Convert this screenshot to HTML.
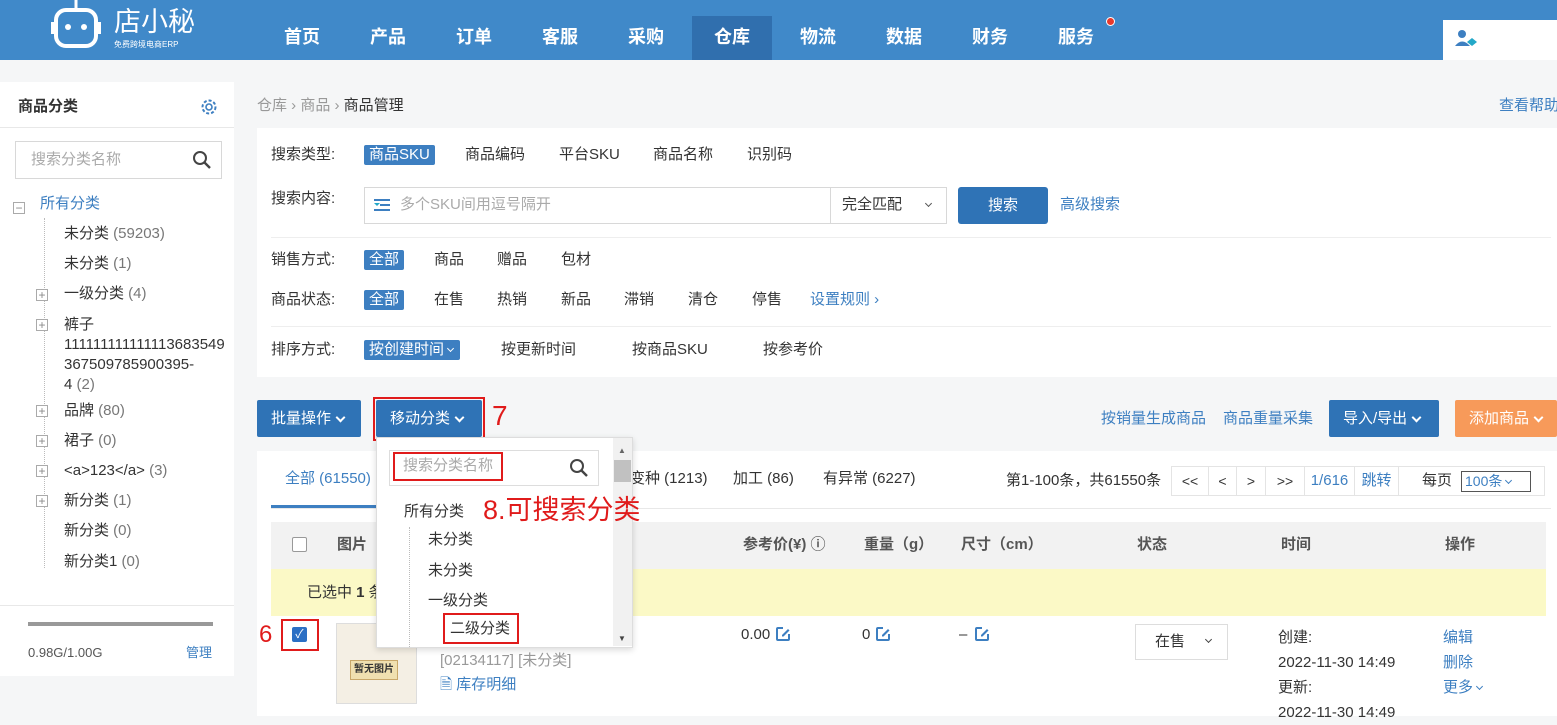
<!DOCTYPE html>
<html><head><meta charset="utf-8"><style>
*{margin:0;padding:0;box-sizing:border-box}
body{width:1557px;height:716px;overflow:hidden;background:#f5f6f7;font-family:"Liberation Sans","Noto Sans CJK SC",sans-serif;font-size:15px;line-height:18px;color:#333;position:relative}
.a{position:absolute;white-space:nowrap}
.hdr{left:0;top:0;width:1557px;height:60px;background:#4089c9}
.nav{top:26px;color:#fff;font-weight:bold;font-size:18px;line-height:22px}
.blue{color:#3d7fc1}
.gray{color:#777}
.tag{background:#3d7fc1;color:#fff;padding:1px 5px;border-radius:2px}
.btn{background:#2f73b6;color:#fff;height:37px;line-height:37px;padding:0 14px;border-radius:2px}
.red{border:2px solid #e01b1b}
.box{background:#fff}
.pl{width:12px;height:12px;border:1px solid #aaa;background:#fff;font-size:12px;line-height:10px;text-align:center;color:#888}
.ch{display:inline-block;width:7px;height:7px;border-right:2px solid currentColor;border-bottom:2px solid currentColor;transform:rotate(45deg);margin:0 0 4px 6px;vertical-align:middle}
.ch.s{width:5px;height:5px;border-width:1.5px;margin-left:4px}
.pg{top:466px;height:30px;border:1px solid #e4e4e4;line-height:28px;text-align:center;font-size:14px}
</style></head><body>
<div class="a hdr"></div>
<div class="a" style="left:692px;top:16px;width:80px;height:44px;background:#306fae"></div>
<svg class="a" style="left:50px;top:0" width="52" height="52" viewBox="0 0 52 52"><line x1="26" y1="0" x2="26" y2="8" stroke="#fff" stroke-width="3"/><rect x="6" y="10" width="40" height="36" rx="10" fill="none" stroke="#fff" stroke-width="4"/><circle cx="18" cy="27" r="3" fill="#fff"/><circle cx="34" cy="27" r="3" fill="#fff"/><rect x="1" y="22" width="4" height="12" fill="#fff"/><rect x="47" y="22" width="4" height="12" fill="#fff"/></svg>
<div class="a" style="left:114px;top:7px;color:#fff;font-size:27px;line-height:30px">店小秘</div>
<div class="a" style="left:114px;top:40px;color:#fff;font-size:8px;line-height:10px">免费跨境电商ERP</div>
<div class="a nav" style="left:284px">首页</div>
<div class="a nav" style="left:370px">产品</div>
<div class="a nav" style="left:456px">订单</div>
<div class="a nav" style="left:542px">客服</div>
<div class="a nav" style="left:628px">采购</div>
<div class="a nav" style="left:714px">仓库</div>
<div class="a nav" style="left:800px">物流</div>
<div class="a nav" style="left:886px">数据</div>
<div class="a nav" style="left:972px">财务</div>
<div class="a nav" style="left:1058px">服务</div>
<div class="a" style="left:1106px;top:17px;width:9px;height:9px;border-radius:50%;background:#e8392c;border:1px solid #fff"></div>
<div class="a" style="left:1443px;top:20px;width:114px;height:40px;background:#fff"></div>
<svg class="a" style="left:1453px;top:28px" width="32" height="24"><circle cx="9" cy="6" r="4" fill="#3d7fc1"/><path d="M2 18 q7-9 15 0z" fill="#3d7fc1"/><path d="M14 14 l5-4 l5 4 l-5 4z" fill="#23a8c8"/></svg>

<div class="a box" style="left:0;top:82px;width:234px;height:594px"></div>
<div class="a" style="left:0;top:82px;width:234px;height:46px;border-bottom:1px solid #e8e8e8"></div>
<div class="a" style="left:18px;top:98px;font-weight:bold">商品分类</div>
<svg class="a" style="left:199px;top:97px" width="20" height="20" viewBox="0 0 20 20"><circle cx="10" cy="10" r="6.5" fill="none" stroke="#3d7fc1" stroke-width="2" stroke-dasharray="3 2"/><circle cx="10" cy="10" r="3" fill="none" stroke="#3d7fc1" stroke-width="1.6"/></svg>
<div class="a" style="left:15px;top:141px;width:207px;height:38px;border:1px solid #d8d8d8"></div>
<div class="a" style="left:31px;top:151px;color:#aaa">搜索分类名称</div>
<svg class="a" style="left:192px;top:150px" width="20" height="20"><circle cx="8" cy="8" r="6" fill="none" stroke="#444" stroke-width="2"/><line x1="12.5" y1="12.5" x2="18" y2="18" stroke="#444" stroke-width="2.4"/></svg>
<div class="a pl" style="left:13px;top:202px">−</div>
<div class="a blue" style="left:40px;top:195px">所有分类</div>
<div class="a" style="left:44px;top:218px;width:1px;height:350px;border-left:1px dotted #bbb"></div>
<div class="a" style="left:64px;top:225px">未分类 <span class="gray">(59203)</span></div>
<div class="a" style="left:64px;top:255px">未分类 <span class="gray">(1)</span></div>
<div class="a" style="left:64px;top:285px">一级分类 <span class="gray">(4)</span></div>
<div class="a" style="left:64px;top:315px;line-height:20px">裤子<br>111111111111113683549<br>367509785900395-<br>4 <span class="gray">(2)</span></div>
<div class="a" style="left:64px;top:402px">品牌 <span class="gray">(80)</span></div>
<div class="a" style="left:64px;top:432px">裙子 <span class="gray">(0)</span></div>
<div class="a" style="left:64px;top:462px">&lt;a&gt;123&lt;/a&gt; <span class="gray">(3)</span></div>
<div class="a" style="left:64px;top:492px">新分类 <span class="gray">(1)</span></div>
<div class="a" style="left:64px;top:522px">新分类 <span class="gray">(0)</span></div>
<div class="a" style="left:64px;top:553px">新分类1 <span class="gray">(0)</span></div>
<div class="a pl" style="left:36px;top:289px">+</div>
<div class="a pl" style="left:36px;top:319px">+</div>
<div class="a pl" style="left:36px;top:405px">+</div>
<div class="a pl" style="left:36px;top:435px">+</div>
<div class="a pl" style="left:36px;top:465px">+</div>
<div class="a pl" style="left:36px;top:495px">+</div>
<div class="a" style="left:0;top:605px;width:234px;height:1px;background:#e8e8e8"></div>
<div class="a" style="left:28px;top:622px;width:185px;height:4px;background:#999"></div>
<div class="a" style="left:28px;top:644px;font-size:13px;color:#555">0.98G/1.00G</div>
<div class="a blue" style="left:186px;top:644px;font-size:13px">管理</div>

<div class="a" style="left:257px;top:97px;color:#999">仓库 › 商品 › <span style="color:#333">商品管理</span></div>
<div class="a blue" style="left:1499px;top:97px">查看帮助</div>

<div class="a box" style="left:257px;top:128px;width:1300px;height:249px"></div>
<div class="a" style="left:271px;top:146px">搜索类型:</div>
<div class="a tag" style="left:364px;top:145px">商品SKU</div>
<div class="a" style="left:465px;top:146px">商品编码</div>
<div class="a" style="left:559px;top:146px">平台SKU</div>
<div class="a" style="left:653px;top:146px">商品名称</div>
<div class="a" style="left:747px;top:146px">识别码</div>
<div class="a" style="left:271px;top:190px">搜索内容:</div>
<div class="a" style="left:364px;top:187px;width:583px;height:37px;border:1px solid #d8d8d8;background:#fff"></div>
<div class="a" style="left:830px;top:187px;width:1px;height:37px;background:#d8d8d8"></div>
<svg class="a" style="left:372px;top:197px" width="20" height="16"><path d="M2 3h16M8 8h10M2 13h16" stroke="#3d7fc1" stroke-width="2"/><path d="M2 6l3 3 3-3z" fill="#23a8c8"/></svg>
<div class="a" style="left:400px;top:196px;color:#aaa">多个SKU间用逗号隔开</div>
<div class="a" style="left:842px;top:196px">完全匹配</div>
<div class="a" style="left:922px;top:196px;color:#555"><span class="ch s"></span></div>
<div class="a btn" style="left:958px;top:187px;width:90px;text-align:center;border-radius:3px">搜索</div>
<div class="a blue" style="left:1060px;top:196px">高级搜索</div>
<div class="a" style="left:271px;top:237px;width:1280px;height:1px;background:#eee"></div>
<div class="a" style="left:271px;top:251px">销售方式:</div>
<div class="a tag" style="left:364px;top:250px">全部</div>
<div class="a" style="left:434px;top:251px">商品</div><div class="a" style="left:497px;top:251px">赠品</div><div class="a" style="left:561px;top:251px">包材</div>
<div class="a" style="left:271px;top:291px">商品状态:</div>
<div class="a tag" style="left:364px;top:290px">全部</div>
<div class="a" style="left:434px;top:291px">在售</div><div class="a" style="left:497px;top:291px">热销</div><div class="a" style="left:561px;top:291px">新品</div><div class="a" style="left:624px;top:291px">滞销</div><div class="a" style="left:688px;top:291px">清仓</div><div class="a" style="left:752px;top:291px">停售</div>
<div class="a blue" style="left:810px;top:291px">设置规则 ›</div>
<div class="a" style="left:271px;top:326px;width:1280px;height:1px;background:#eee"></div>
<div class="a" style="left:271px;top:341px">排序方式:</div>
<div class="a tag" style="left:364px;top:340px;padding-right:7px">按创建时间<span class="ch s"></span></div>
<div class="a" style="left:501px;top:341px">按更新时间</div><div class="a" style="left:632px;top:341px">按商品SKU</div><div class="a" style="left:763px;top:341px">按参考价</div>

<div class="a btn" style="left:257px;top:400px;width:104px">批量操作<span class="ch"></span></div>
<div class="a btn" style="left:376px;top:400px;width:106px">移动分类<span class="ch"></span></div>
<div class="a red" style="left:373px;top:397px;width:112px;height:44px"></div>
<div class="a" style="left:492px;top:400px;color:#e01b1b;font-size:28px;line-height:32px">7</div>
<div class="a blue" style="left:1101px;top:410px">按销量生成商品</div>
<div class="a blue" style="left:1223px;top:410px">商品重量采集</div>
<div class="a btn" style="left:1329px;top:400px;width:110px">导入/导出<span class="ch"></span></div>
<div class="a btn" style="left:1455px;top:400px;width:102px;background:#f79a5a">添加商品<span class="ch"></span></div>

<div class="a box" style="left:257px;top:451px;width:1300px;height:265px"></div>
<div class="a blue" style="left:285px;top:470px">全部 (61550)</div>
<div class="a" style="left:271px;top:505px;width:110px;height:3px;background:#3d7fc1"></div>
<div class="a" style="left:271px;top:508px;width:1280px;height:1px;background:#e8e8e8"></div>
<div class="a" style="left:630px;top:470px">变种 (1213)</div>
<div class="a" style="left:733px;top:470px">加工 (86)</div>
<div class="a" style="left:823px;top:470px">有异常 (6227)</div>
<div class="a" style="left:1006px;top:472px">第1-100条，共61550条</div>
<div class="a pg" style="left:1171px;width:38px">&lt;&lt;</div>
<div class="a pg" style="left:1208px;width:29px">&lt;</div>
<div class="a pg" style="left:1236px;width:30px">&gt;</div>
<div class="a pg" style="left:1265px;width:40px">&gt;&gt;</div>
<div class="a pg blue" style="left:1304px;width:51px;font-size:15px">1/616</div>
<div class="a pg blue" style="left:1354px;width:45px;font-size:15px">跳转</div>
<div class="a pg" style="left:1398px;width:147px"></div>
<div class="a" style="left:1422px;top:472px">每页</div>
<div class="a blue" style="left:1461px;top:471px;width:70px;height:21px;border:1px solid #555;font-size:14px;line-height:19px;padding-left:3px">100条<span class="ch s"></span></div>
<div class="a" style="left:271px;top:522px;width:1275px;height:47px;background:#f2f2f2"></div>
<div class="a" style="left:292px;top:537px;width:15px;height:15px;border:1px solid #999;background:#fff;border-radius:2px"></div>
<div class="a" style="left:337px;top:536px;color:#555;font-weight:bold">图片</div>
<div class="a" style="left:743px;top:536px;color:#555;font-weight:bold">参考价(¥) ⓘ</div>
<div class="a" style="left:864px;top:536px;color:#555;font-weight:bold">重量（g）</div>
<div class="a" style="left:961px;top:536px;color:#555;font-weight:bold">尺寸（cm）</div>
<div class="a" style="left:1137px;top:536px;color:#555;font-weight:bold">状态</div>
<div class="a" style="left:1281px;top:536px;color:#555;font-weight:bold">时间</div>
<div class="a" style="left:1445px;top:536px;color:#555;font-weight:bold">操作</div>
<div class="a" style="left:271px;top:569px;width:1275px;height:47px;background:#fbf9c6"></div>
<div class="a" style="left:307px;top:584px">已选中 <b>1</b> 条</div>
<div class="a" style="left:259px;top:622px;color:#e01b1b;font-size:24px;line-height:26px">6</div>
<div class="a red" style="left:281px;top:619px;width:38px;height:32px"></div>
<div class="a" style="left:292px;top:627px;width:15px;height:15px;background:#2b6fc4;border-radius:2px;color:#fff;font-size:12px;line-height:15px;text-align:center">✓</div>
<div class="a" style="left:336px;top:623px;width:81px;height:81px;border:1px solid #ddd;background:#f4efe4"></div>
<div class="a" style="left:350px;top:660px;background:#f0e0b0;border:1px solid #c9a86a;font-size:10px;line-height:14px;padding:2px 3px;font-weight:bold">暂无图片</div>
<div class="a" style="left:440px;top:652px;color:#999">[02134117] [未分类]</div>
<div class="a blue" style="left:440px;top:676px">🗎 库存明细</div>
<svg width="0" height="0" style="position:absolute"><defs><g id="ed"><path d="M8 2H3a1 1 0 0 0-1 1v10a1 1 0 0 0 1 1h10a1 1 0 0 0 1-1V8" fill="none" stroke="#3d7fc1" stroke-width="2"/><path d="M7 9l6-6 1.5 1.5-6 6H7z" fill="#3d7fc1"/></g></defs></svg>
<div class="a" style="left:741px;top:626px">0.00</div><svg class="a" style="left:775px;top:626px" width="16" height="16"><use href="#ed"/></svg>
<div class="a" style="left:862px;top:626px">0</div><svg class="a" style="left:875px;top:626px" width="16" height="16"><use href="#ed"/></svg>
<div class="a" style="left:959px;top:626px">–</div><svg class="a" style="left:974px;top:626px" width="16" height="16"><use href="#ed"/></svg>
<div class="a" style="left:1135px;top:624px;width:93px;height:36px;border:1px solid #ddd"></div>
<div class="a" style="left:1155px;top:633px">在售</div><div class="a" style="left:1202px;top:632px;color:#444"><span class="ch s"></span></div>
<div class="a" style="left:1278px;top:625px;line-height:25px">创建:<br>2022-11-30 14:49<br>更新:<br>2022-11-30 14:49</div>
<div class="a blue" style="left:1443px;top:625px;line-height:25px">编辑<br>删除<br>更多<span class="ch s"></span></div>

<div class="a box" style="left:376px;top:437px;width:257px;height:211px;border:1px solid #ddd;box-shadow:0 2px 6px rgba(0,0,0,.15)"></div>
<div class="a" style="left:613px;top:438px;width:19px;height:208px;background:#f1f1f1"></div>
<div class="a" style="left:614px;top:460px;width:17px;height:22px;background:#c1c1c1"></div>
<div class="a" style="left:618px;top:442px;font-size:8px;color:#666">▲</div>
<div class="a" style="left:618px;top:630px;font-size:8px;color:#444">▼</div>
<div class="a" style="left:389px;top:450px;width:210px;height:36px;border:1px solid #ddd"></div>
<div class="a red" style="left:393px;top:452px;width:110px;height:29px"></div>
<div class="a" style="left:403px;top:457px;color:#aaa">搜索分类名称</div>
<svg class="a" style="left:569px;top:458px" width="20" height="20"><circle cx="8" cy="8" r="6" fill="none" stroke="#444" stroke-width="2"/><line x1="12.5" y1="12.5" x2="18" y2="18" stroke="#444" stroke-width="2.4"/></svg>
<div class="a" style="left:404px;top:503px">所有分类</div>
<div class="a" style="left:483px;top:494px;color:#e01b1b;font-size:27px;line-height:32px">8.可搜索分类</div>
<div class="a" style="left:409px;top:527px;width:1px;height:120px;border-left:1px dotted #bbb"></div>
<div class="a" style="left:428px;top:531px">未分类</div>
<div class="a" style="left:428px;top:562px">未分类</div>
<div class="a" style="left:428px;top:592px">一级分类</div>
<div class="a red" style="left:443px;top:613px;width:76px;height:31px"></div>
<div class="a" style="left:450px;top:620px">二级分类</div>
</body></html>
